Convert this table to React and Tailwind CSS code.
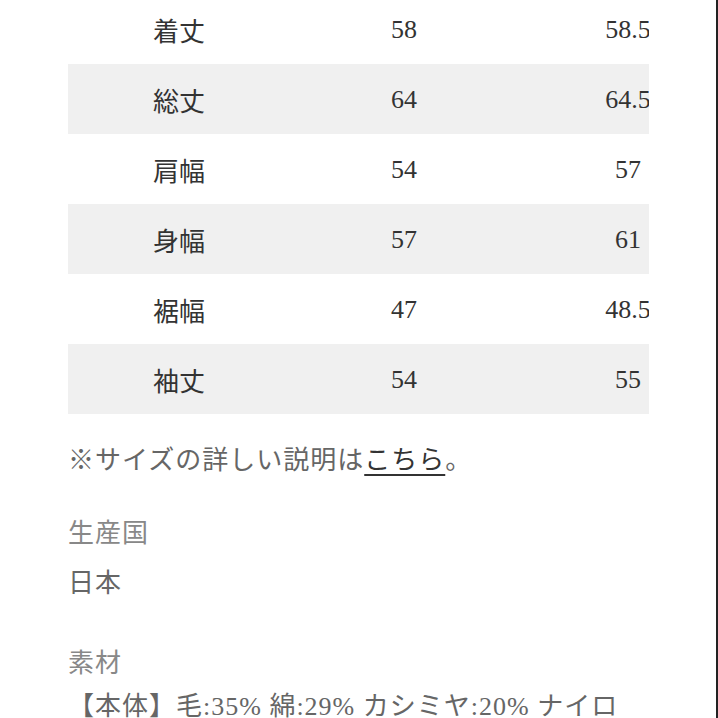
const rows = [
  ['着丈', '58', '58.5'],
  ['総丈', '64', '64.5'],
  ['肩幅', '54', '57'],
  ['身幅', '57', '61'],
  ['裾幅', '47', '48.5'],
  ['袖丈', '54', '55'],
];

const font = { fontFamily: '"Liberation Serif", "Noto Sans CJK JP", serif' };

export default function App() {
  return (
    <div
      className="w-[718px] h-[718px] overflow-hidden bg-white border-r-2 border-[#222] text-[26px]"
      style={font}
    >
      <div className="pl-[68px] -mt-[6px]">
        {/* size table, wider than its box so the last column is cut off */}
        <div className="w-[581px] overflow-hidden">
          <div className="w-[672px]">
            {rows.map((r, i) => (
              <div
                key={r[0]}
                className={`grid grid-cols-3 h-[70px] items-center text-center text-[#333] ${i % 2 === 1 ? 'bg-[#f0f0f0]' : ''}`}
              >
                <span className="font-['Noto_Sans_CJK_JP'] -translate-x-[1px]">{r[0]}</span>
                <span>{r[1]}</span>
                <span>{r[2]}</span>
              </div>
            ))}
          </div>
        </div>

        <p className="mt-[24px] leading-[40px] text-[#666] font-['Noto_Sans_CJK_JP'] tracking-[1px]">
          ※サイズの詳しい説明は
          <a href="#" className="text-[#333] underline underline-offset-[5px] decoration-[2px]">こちら</a>。
        </p>

        <div className="mt-[32px] leading-[47px] tracking-[1px]">
          <p className="text-[#888]">生産国</p>
          <p className="text-[#666] font-['Noto_Sans_CJK_JP']">日本</p>
        </div>

        <div className="mt-[38px] leading-[43px] w-[581px] tracking-[1px]">
          <p className="text-[#888]">素材</p>
          <p className="text-[#666]">【本体】毛:35% 綿:29% カシミヤ:20% ナイロン:16%</p>
        </div>
      </div>
    </div>
  );
}
